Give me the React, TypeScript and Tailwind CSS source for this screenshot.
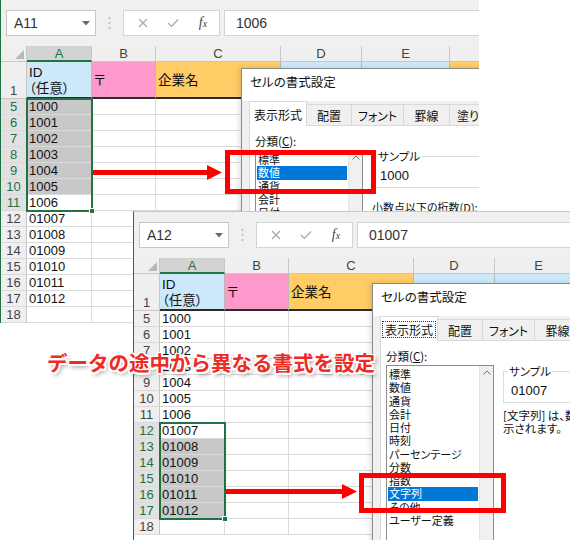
import React from 'react';

const SANS = "font-['Liberation_Sans','Noto_Sans_CJK_JP',sans-serif]";
const JP = "font-['Noto_Sans_CJK_JP','Noto_Sans',sans-serif]";
const PALT = "[font-feature-settings:'palt']";

const COLS = [
  { key: 'A', w: 'w-[65px]', fill: 'bg-[#cde9f9]' },
  { key: 'B', w: 'w-[64px]', fill: 'bg-[#ff99cc]' },
  { key: 'C', w: 'w-[125px]', fill: 'bg-[#ffcc66]' },
  { key: 'D', w: 'w-[81px]', fill: 'bg-[#cde9f9]' },
  { key: 'E', w: 'w-[88px]', fill: 'bg-[#cde9f9]' },
  { key: 'F', w: 'w-[120px]', fill: 'bg-[#ffcc66]' },
];

const ROWS = [
  { n: 5, v: '1000' },
  { n: 6, v: '1001' },
  { n: 7, v: '1002' },
  { n: 8, v: '1003' },
  { n: 9, v: '1004' },
  { n: 10, v: '1005' },
  { n: 11, v: '1006' },
  { n: 12, v: '01007' },
  { n: 13, v: '01008' },
  { n: 14, v: '01009' },
  { n: 15, v: '01010' },
  { n: 16, v: '01011' },
  { n: 17, v: '01012' },
  { n: 18, v: '' },
];

const TABS = [
  { t: '表示形式', w: 'w-[58px]' },
  { t: '配置', w: 'w-[45px]' },
  { t: 'フォント', w: 'w-[52px]' },
  { t: '罫線', w: 'w-[46px]' },
  { t: '塗りつぶし', w: 'w-[70px]' },
];

const CATS = ['標準', '数値', '通貨', '会計', '日付', '時刻', 'パーセンテージ', '分数', '指数', '文字列', 'その他', 'ユーザー定義'];

function TopBar({ nameBox, formula }: { nameBox: string; formula: string }) {
  return (
    <div className="flex h-[46px] items-start bg-[#f0f0f0] pl-[5px] pt-[10px]">
      <div className="flex h-[26px] w-[90px] shrink-0 items-center justify-between border border-[#c6c6c6] bg-white pl-[7px] pr-[5px]">
        <span className={`text-[14px] text-[#333] ${SANS}`}>{nameBox}</span>
        <svg width="8" height="5" viewBox="0 0 8 5">
          <polygon points="0,0 8,0 4,4.5" fill="#6a6a6a" />
        </svg>
      </div>
      <div className="flex h-[26px] w-[27px] shrink-0 items-center justify-center">
        <svg width="3" height="14" viewBox="0 0 3 14">
          <circle cx="1.5" cy="2" r="1" fill="#b5b5b5" />
          <circle cx="1.5" cy="7" r="1" fill="#b5b5b5" />
          <circle cx="1.5" cy="12" r="1" fill="#b5b5b5" />
        </svg>
      </div>
      <div className="flex h-[26px] w-[97px] shrink-0 items-center border border-[#d4d4d4] bg-white pl-[4px]">
        <div className="flex w-[30px] justify-center">
          <svg width="10" height="10" viewBox="0 0 10 10">
            <path d="M1 1 L9 9 M9 1 L1 9" stroke="#a8a8a8" strokeWidth="1.2" fill="none" />
          </svg>
        </div>
        <div className="flex w-[30px] justify-center">
          <svg width="12" height="10" viewBox="0 0 12 10">
            <path d="M1 5 L4.5 8.5 L11 1.5" stroke="#a8a8a8" strokeWidth="1.2" fill="none" />
          </svg>
        </div>
        <div className="flex w-[30px] justify-center">
          <span className="font-['Liberation_Serif',serif] text-[14px] italic leading-none text-[#444]">
            f<span className="text-[10px]">x</span>
          </span>
        </div>
      </div>
      <div className={`ml-[4px] flex h-[26px] flex-1 items-center border-y border-l border-[#d4d4d4] bg-white pl-[11px] text-[14px] text-[#333] ${SANS}`}>
        {formula}
      </div>
    </div>
  );
}

function Sheet({
  className,
  nameBox,
  formula,
  selStart,
  selEnd,
  active,
  children,
}: {
  className: string;
  nameBox: string;
  formula: string;
  selStart: number;
  selEnd: number;
  active: number;
  children: React.ReactNode;
}) {
  const selTop = 53 + selStart * 16 - 1;
  const selHeight = (selEnd - selStart + 1) * 16 + 2;
  return (
    <div className={`absolute overflow-hidden border-l border-l-[#217346] bg-white ${className}`}>
      <TopBar nameBox={nameBox} formula={formula} />
      <div className={`relative ${SANS}`}>
        {/* column header row */}
        <div className="flex h-[16px]">
          <div className="flex w-[26px] shrink-0 items-end justify-end border-b border-r border-[#c6c6c6] bg-[#efefef] p-[2px]">
            <svg width="9" height="9" viewBox="0 0 9 9">
              <polygon points="9,0 9,9 0,9" fill="#b8b8b8" />
            </svg>
          </div>
          {COLS.map((c) => (
            <div
              key={c.key}
              className={`flex shrink-0 items-center justify-center border-r text-[13px] leading-none ${c.w} ${
                c.key === 'A'
                  ? 'border-b-2 border-r-[#c6c6c6] border-b-[#217346] bg-[#d3d3d3] text-[#217346]'
                  : 'border-b border-[#c6c6c6] bg-[#efefef] text-[#444]'
              }`}
            >
              {c.key}
            </div>
          ))}
        </div>
        {/* row 1 */}
        <div className="flex h-[37px]">
          <div className="flex w-[26px] shrink-0 items-end justify-center border-b border-r border-[#c6c6c6] bg-[#efefef] pb-[1px] text-[13px] leading-none text-[#444]">
            1
          </div>
          {COLS.map((c) => (
            <div
              key={c.key}
              className={`flex shrink-0 flex-col justify-center border-b-2 border-r border-b-[#2a2a2a] border-r-[#b9b9b9] pl-[2px] text-[13.5px] leading-[15px] text-[#111] ${JP} ${PALT} ${c.w} ${c.fill}`}
            >
              {c.key === 'A' && (
                <>
                  <span className={SANS}>ID</span>
                  <span>（任意）</span>
                </>
              )}
              {c.key === 'B' && <span>〒</span>}
              {c.key === 'C' && <span>企業名</span>}
            </div>
          ))}
        </div>
        {/* data rows */}
        {ROWS.map((r, i) => {
          const inSel = i >= selStart && i <= selEnd;
          const filled = inSel && i !== active;
          return (
            <div key={r.n} className="flex h-[16px]">
              <div
                className={`flex w-[26px] shrink-0 items-center justify-center border-b border-r border-b-[#dadada] border-r-[#c6c6c6] text-[13px] leading-none ${
                  inSel ? 'bg-[#e1e1e1] text-[#217346]' : 'bg-[#efefef] text-[#444]'
                }`}
              >
                {r.n}
              </div>
              {COLS.map((c) => (
                <div
                  key={c.key}
                  className={`flex shrink-0 items-center border-b border-r border-[#dadada] pl-[2px] text-[13px] leading-none text-[#111] ${c.w} ${
                    c.key === 'A' && filled ? 'bg-[#c8c8c8]' : 'bg-white'
                  }`}
                >
                  {c.key === 'A' ? r.v : ''}
                </div>
              ))}
            </div>
          );
        })}
        {/* selection frame */}
        <div
          className="absolute left-[25px] w-[67px] border-2 border-[#217346]"
          style={{ top: selTop, height: selHeight }}
        >
          <div className="absolute -bottom-[4px] -right-[4px] h-[6px] w-[6px] border border-white bg-[#217346]" />
        </div>
      </div>
      {children}
    </div>
  );
}

function FormatDialog({
  className,
  selected,
  focusTab,
  sample,
  children,
}: {
  className: string;
  selected: number;
  focusTab: boolean;
  sample: string;
  children: React.ReactNode;
}) {
  return (
    <div
      className={`absolute flex h-[300px] w-[260px] flex-col border-l border-t border-[#8a8a8a] bg-[#f0f0f0] shadow-[-2px_0_5px_rgba(0,0,0,0.12)] ${JP} ${PALT} ${className}`}
    >
      <div className="h-[32px] shrink-0 bg-white pl-[8px] pt-[4px] text-[12.5px] leading-[18px] text-[#111]">
        セルの書式設定
      </div>
      <div className="flex h-[24px] shrink-0 items-end pl-[7px]">
        {TABS.map((tab, i) =>
          i === 0 ? (
            <div
              key={tab.t}
              className={`relative z-10 -mb-px flex h-[25px] shrink-0 items-center justify-center border-x border-t border-[#d9d9d9] bg-white text-[12px] text-[#111] ${tab.w}`}
            >
              <span className={focusTab ? 'border border-dotted border-[#333] px-[2px] leading-[15px]' : 'leading-[15px]'}>
                {tab.t}
              </span>
            </div>
          ) : (
            <div
              key={tab.t}
              className={`flex h-[21px] shrink-0 items-center justify-center border-r border-t border-[#d9d9d9] bg-[#f0f0f0] text-[12px] leading-[15px] text-[#111] ${tab.w}`}
            >
              {tab.t}
            </div>
          )
        )}
      </div>
      <div className="mx-[7px] flex flex-1 border border-[#d9d9d9] bg-white pl-[5px] pt-[7px] text-[11px] text-[#111]">
        <div className="flex w-[108px] shrink-0 flex-col">
          <div className="text-[11.5px] leading-[16px]">
            分類(<span className="underline">C</span>):
          </div>
          <div className="mt-[1px] flex h-[220px] border border-[#8c8c8c]">
            <div className="flex-1 pt-[2px]">
              {CATS.map((cat, i) => (
                <div
                  key={cat}
                  className={`mx-[1px] whitespace-nowrap pl-[1px] leading-[13.25px] ${
                    i === selected ? 'bg-[#0078d7] text-white' : ''
                  }`}
                >
                  {cat}
                </div>
              ))}
            </div>
            <div className="flex w-[14px] shrink-0 justify-center border-l border-[#e4e4e4] bg-[#f0f0f0] pt-[4px]">
              <svg width="8" height="5" viewBox="0 0 8 5">
                <path d="M0.5 4.5 L4 1 L7.5 4.5" stroke="#707070" strokeWidth="1" fill="none" />
              </svg>
            </div>
          </div>
        </div>
        <div className="ml-[9px] flex flex-1 flex-col">
          <fieldset className="mt-[15px] h-[40px] border border-[#dcdcdc] px-[4px]">
            <legend className="px-[1px] text-[11.5px] leading-[16px]">サンプル</legend>
            <div className={`pl-[3px] pt-[4px] text-[13px] leading-[16px] ${SANS}`}>{sample}</div>
          </fieldset>
          {children}
        </div>
      </div>
    </div>
  );
}

function Arrow({ className, len }: { className: string; len: number }) {
  return (
    <svg className={className} width={len} height="15" viewBox={`0 0 ${len} 15`}>
      <rect x="0" y="5" width={len - 12} height="5" fill="#ff0000" />
      <polygon points={`${len - 15},0 ${len},7.5 ${len - 15},15`} fill="#ff0000" />
    </svg>
  );
}

export default function App() {
  return (
    <div className="relative h-[540px] w-[570px] overflow-hidden bg-white">
      <Sheet className="left-0 top-0 h-[323px] w-[479px]" nameBox="A11" formula="1006" selStart={0} selEnd={6} active={6}>
        <FormatDialog className="left-[240px] top-[68px]" selected={1} focusTab={false} sample="1000">
          <div className="mt-[12px] whitespace-nowrap text-[11px] leading-[14px]">
            小数点以下の桁数(<span className="underline">D</span>):
          </div>
        </FormatDialog>
      </Sheet>

      <Sheet
        className="left-[133px] top-[211px] h-[329px] w-[437px] border-t border-t-[#c8c8c8]"
        nameBox="A12"
        formula="01007"
        selStart={7}
        selEnd={12}
        active={7}
      >
        <FormatDialog className="left-[238px] top-[71px]" selected={9} focusTab={true} sample="01007">
          <div className="mt-[6px] whitespace-nowrap text-[11.5px] leading-[12.5px]">
            <div>[文字列] は、数値も文字列として扱われます。</div>
            <div>示されます。</div>
          </div>
        </FormatDialog>
      </Sheet>

      <Arrow className="absolute left-[93px] top-[165px]" len={129} />
      <div className="absolute left-[225px] top-[150px] h-[44px] w-[151px] border-[5px] border-[#ff0000]" />

      <Arrow className="absolute left-[225px] top-[484px]" len={132} />
      <div className="absolute left-[359px] top-[473px] h-[40px] w-[147px] border-[5px] border-[#ff0000]" />

      <div
        className={`absolute left-[47px] top-[349px] whitespace-nowrap text-[20.5px] font-bold leading-[26px] text-[#ee2b24] ${JP} [text-shadow:1.5px_1.5px_0_#fff,-1.5px_-1.5px_0_#fff,1.5px_-1.5px_0_#fff,-1.5px_1.5px_0_#fff,0_1.5px_0_#fff,0_-1.5px_0_#fff,1.5px_0_0_#fff,-1.5px_0_0_#fff,2px_3px_4px_rgba(0,0,0,0.45)]`}
      >
        データの途中から異なる書式を設定
      </div>
    </div>
  );
}
